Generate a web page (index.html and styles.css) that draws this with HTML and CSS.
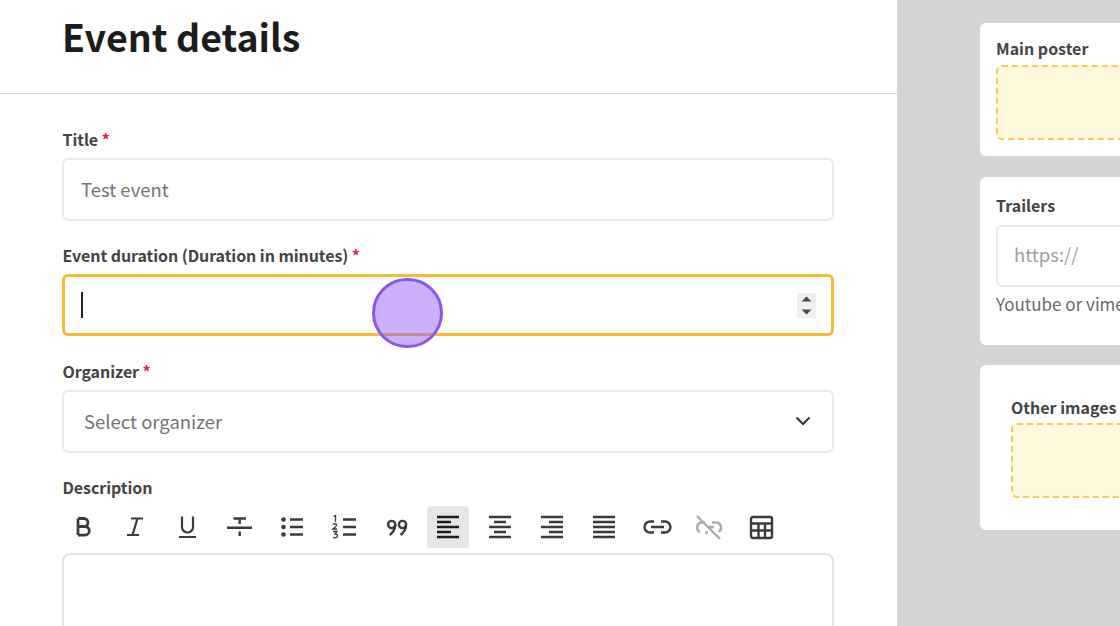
FILE: index.html
```html
<!DOCTYPE html>
<html lang="en">
<head>
<meta charset="utf-8">
<title>Event details</title>
<link rel="stylesheet" href="styles.css">
</head>
<body>
<div class="page">
  <main class="main">
    <header class="head"><h1>Event details</h1></header>
    <form class="form">
      <div class="field">
        <label class="label">Title <span class="req">*</span></label>
        <input class="input" type="text" placeholder="Test event">
      </div>
      <div class="field">
        <label class="label">Event duration (Duration in minutes) <span class="req">*</span></label>
        <div class="input focused">
          <span class="caret"></span>
          <span class="spin">
            <svg width="11" height="6" viewBox="0 0 10 6" preserveAspectRatio="none"><path d="M5 .5 9.500 5.500H.5z"/></svg>
            <svg width="11" height="6" viewBox="0 0 10 6" preserveAspectRatio="none"><path d="M.5 .5h9L5 5.500z"/></svg>
          </span>
        </div>
      </div>
      <div class="field">
        <label class="label">Organizer <span class="req">*</span></label>
        <div class="input select">
          <span>Select organizer</span>
          <svg width="16" height="10" viewBox="0 0 16 10"><path d="M1.500 1.500 8 8l6.500-6.500" fill="none" stroke="#333" stroke-width="2"/></svg>
        </div>
      </div>
      <div class="field">
        <label class="label">Description</label>
        <div class="toolbar">
          <button type="button" class="tool"><svg viewBox="0 0 24 24"><path d="M7 3.500v16.500M7 3.500h6a4 4 0 0 1 0 8H7m0 0h7a4.300 4.300 0 0 1 0 8.600H7" stroke-width="2.800"/></svg></button>
          <button type="button" class="tool"><svg viewBox="0 0 24 24"><path d="M8 3.500h12M4 20h12M14.500 3.500 9.500 20" stroke-width="2.200"/></svg></button>
          <button type="button" class="tool"><svg viewBox="0 0 24 24"><path d="M7 1.500v10.500a5.500 5.500 0 0 0 11 0V1.500M4 22h17" stroke-width="2.200"/></svg></button>
          <button type="button" class="tool"><svg viewBox="0 0 24 24"><path d="M6.500 3.500H19M12.700 3.500V9M0 12.700h25M12.700 16.500v4.500"/></svg></button>
          <button type="button" class="tool"><svg viewBox="0 0 24 24"><path d="M10 4.500h13M10 12h13M10 19.500h13"/><circle cx="3.500" cy="4.500" r="2.300" class="fill"/><circle cx="3.500" cy="12" r="2.300" class="fill"/><circle cx="3.500" cy="19.500" r="2.300" class="fill"/></svg></button>
          <button type="button" class="tool"><svg viewBox="0 0 24 24"><path d="M11 4.500h13M11 12h13M11 19.500h13"/><path d="M1.500 1.500 3.500 .5V7M1 9.500q2.500-1.500 3.500 0 .5 1.500-3.500 4.500h4M1 16.500h4l-2 2.500q2.500 0 2.500 2T1 22.500" stroke-width="1.300"/></svg></button>
          <button type="button" class="tool"><svg viewBox="-1 0 24 24"><circle cx="6.700" cy="9.500" r="3.600"/><circle cx="17.500" cy="9.500" r="3.600"/><path d="M10.300 9.500q0 6-5.500 10.500M21.100 9.500q0 6-5.500 10.500"/></svg></button>
          <button type="button" class="tool active"><svg viewBox="0 0 24 24"><path d="M1 2h22M1 7h14M1 12h22M1 17h14M1 22h22"/></svg></button>
          <button type="button" class="tool"><svg viewBox="0 0 24 24"><path d="M1 2h22M6 7h12M1 12h22M6 17h12M1 22h22"/></svg></button>
          <button type="button" class="tool"><svg viewBox="0 0 24 24"><path d="M1 2h22M9 7h14M1 12h22M9 17h14M1 22h22"/></svg></button>
          <button type="button" class="tool"><svg viewBox="0 0 24 24"><path d="M1 2h22M1 7h22M1 12h22M1 17h22M1 22h22"/></svg></button>
          <button type="button" class="tool"><svg viewBox="0 0 24 24"><path d="M9 6.500H5a5.500 5.500 0 0 0 0 11h4M16 6.500h4a5.500 5.500 0 0 1 0 11h-4M6 12h13"/></svg></button>
          <button type="button" class="tool muted"><svg viewBox="0 0 24 24"><path d="M8 7.500H5a5 5 0 0 0-2 9.500M15 7.500h4a5 5 0 0 1 2.500 9.300M12 12h5M8 17.500h3M0 1l23 23"/></svg></button>
          <button type="button" class="tool"><svg viewBox="0 0 24 24"><path d="M4 2h17a2 2 0 0 1 2 2v17a2 2 0 0 1-2 2H4a2 2 0 0 1-2-2V4a2 2 0 0 1 2-2zM2 8.500h21M2 15.500h21M9.500 8.500V23M16 8.500V23"/></svg></button>
        </div>
        <div class="editor"></div>
      </div>
    </form>
  </main>
  <aside class="side">
    <section class="card poster">
      <h2 class="card-title">Main poster</h2>
      <div class="drop"></div>
    </section>
    <section class="card trailers">
      <h2 class="card-title">Trailers</h2>
      <input class="input url" type="text" placeholder="https://">
      <p class="hint">Youtube or vimeo links</p>
    </section>
    <section class="card others">
      <h2 class="card-title">Other images</h2>
      <div class="drop"></div>
    </section>
  </aside>
</div>
<div class="pointer"></div>
</body>
</html>
```
FILE: styles.css
```css
* { box-sizing: border-box; }
html, body { margin: 0; height: 100%; overflow: hidden; }
body { font-family: "Noto Sans CJK SC", "Noto Sans", sans-serif; color: #363636; background: #fff; }
.page { display: flex; width: 1120px; height: 626px; overflow: hidden; }
.main { flex: 0 0 897px; height: 626px; overflow: hidden; background: #fff; }
.head { height: 94px; padding: 10px 62px 0; border-bottom: 1px solid #d9d9d9; }
.head h1 { margin: 0; font-size: 37.500px; line-height: 52px; font-weight: 700; color: #1c1c1c; }
.form { padding: 32px 63px 0 62px; display: flex; flex-direction: column; gap: 21px; }
.field { display: flex; flex-direction: column; }
.label { font-size: 16px; line-height: 26px; font-weight: 600; color: #444; margin-bottom: 6px; padding-left: .5px; letter-spacing: -.07px; }
.req { color: #f01a45; }
.input { display: flex; align-items: center; width: 100%; height: 63px; padding: 0 18px 2px 17px; font: inherit; font-size: 18.500px; color: #757575; background: #fff; border: 2px solid #ebebeb; border-radius: 6px; outline: none; }
.input::placeholder { color: #757575; opacity: 1; }
.focused { height: 62px; margin-bottom: 1px; justify-content: space-between; border: 3px solid #f6bd34; padding: 0 15px 0 16px; }
.caret { width: 2px; height: 26px; background: #222; }
.spin { width: 19px; height: 25px; display: flex; flex-direction: column; align-items: center; justify-content: center; gap: 7px; background: #efefef; }
.spin svg { fill: #4a4a4a; display: block; }
.select { justify-content: space-between; padding-left: 20px; padding-right: 21px; }
.toolbar { display: flex; gap: 10.150px; height: 42px; }
.tool { flex: 0 0 42px; height: 42px; padding: 0; border: 0; border-radius: 3px; background: transparent; display: flex; align-items: center; justify-content: center; }
.tool svg { width: 24px; height: 24px; fill: none; stroke: #3b3b3b; stroke-width: 2.400; display: block; overflow: visible; }
.tool .fill { fill: #3b3b3b; stroke: none; }
.tool.active { background: #e6e6e6; }
.tool.active svg { stroke: #1c1c1c; }
.tool.muted svg { stroke: #ababab; }
.editor { margin-top: 5px; height: 200px; border: 2px solid #e2e2e2; border-radius: 8px; background: #fff; }
.side { flex: 1 0 auto; height: 626px; background: #d4d4d4; padding: 23px 0 0 83px; display: flex; flex-direction: column; gap: 21px; overflow: hidden; }
.card { width: 300px; background: #fff; border-radius: 6px; padding: 13px 16px 0; }
.card-title { margin: 0 0 5px; font-size: 16px; line-height: 24px; font-weight: 600; color: #444; }
.poster { height: 133px; }
.trailers { height: 168px; padding-top: 16px; }
.trailers .card-title { margin-bottom: 8px; }
.others { height: 165px; padding: 30px 31px 0; margin-top: -1px; }
.others .card-title { margin-bottom: 4px; }
.drop { height: 75px; background: #fef9dc; border: 2px dashed #f6c95a; border-radius: 6px; }
.url { width: 260px; height: 62px; padding: 0 16px 4px; }
.url::placeholder { color: #a0a0a0; }
.hint { margin: 4px 0 0; font-size: 17px; line-height: 26px; color: #6a6a6a; white-space: nowrap; }
.pointer { position: absolute; left: 372px; top: 277.500px; width: 70.500px; height: 70.500px; border-radius: 50%; background: rgba(147, 90, 250, .48); border: 3px solid #8b55f6; }
```
